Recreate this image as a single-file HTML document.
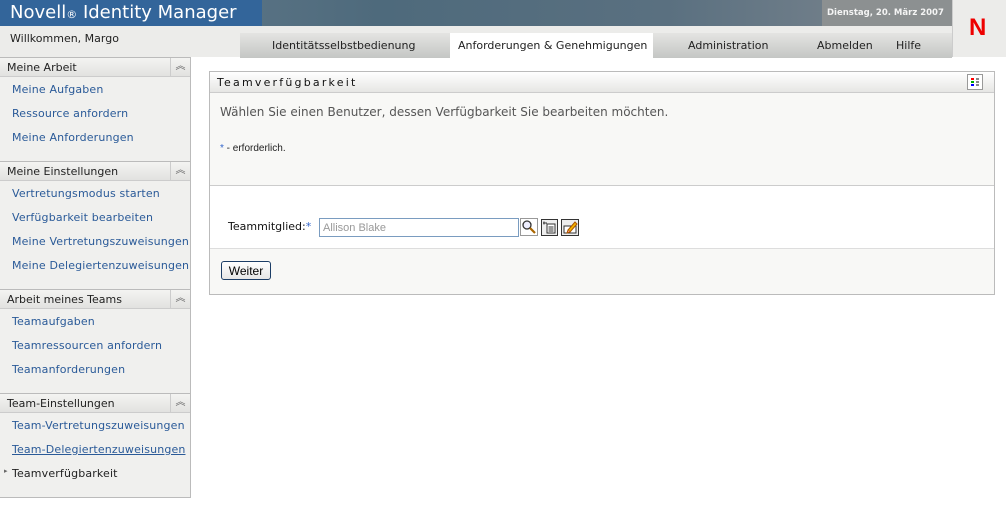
<!DOCTYPE html>
<html><head><meta charset="utf-8"><style>
*{margin:0;padding:0;box-sizing:border-box}
body{width:1006px;height:517px;background:#fff;font-family:"DejaVu Sans","Liberation Sans",sans-serif;font-size:12px;position:relative;overflow:hidden}
.a{position:absolute;white-space:nowrap}
.top{left:0;top:0;width:952px;height:26px;background:linear-gradient(90deg,#6a8090,#4e6a7c 40%,#5a7080 70%,#808890)}
.logo{left:0;top:0;width:262px;height:26px;background:#33659a;color:#fff;font-size:18px;padding:2px 0 0 10px}
.date{left:822px;top:0;width:130px;height:26px;background:#8c9091;color:#f4f4f4;font-size:8.5px;font-weight:bold;padding:8px 0 0 5px}
.bar{left:0;top:26px;width:952px;height:31px;background:#ececea}
.tabs{left:240px;top:33px;width:712px;height:25px;background:linear-gradient(#e4e4e2,#c4c6c4)}
.tab{top:33px;height:25px;padding-top:6px;font-size:11px;color:#222}
.nbox{left:952px;top:0;width:54px;height:57px;background:#ececea;border-left:1px solid #ccc}
.side{left:0;top:57px;width:191px;height:441px;background:#f0f0ee;border-right:1px solid #bbb;border-bottom:1px solid #bbb}
.sh{left:0;width:190px;height:20px;background:linear-gradient(#f4f4f2,#e2e2e0);border-top:1px solid #bbb;border-bottom:1px solid #ccc;font-size:11px;color:#222;padding:3px 0 0 7px}
.sh i{position:absolute;right:0;top:0;width:20px;height:18px;border-left:1px solid #ccc;font-style:normal;font-size:10px;color:#666;text-align:center;line-height:18px}
.lk{left:12px;font-size:11px;color:#2a5a98;letter-spacing:0.15px}
.panel{left:209px;top:71px;width:786px;height:224px;border:1px solid #bbb;background:#f8f8f6}
</style></head><body>
<div class="a top"></div>
<div class="a logo">Novell<span style="font-size:11px">®</span> Identity Manager</div>
<div class="a date">Dienstag, 20. März 2007</div>
<div class="a bar"></div>
<div class="a" style="left:10px;top:32px;font-size:11px;color:#222">Willkommen, Margo</div>
<div class="a tabs"></div>
<div class="a" style="left:450px;top:33px;width:203px;height:25px;background:#fff"></div>
<div class="a tab" style="left:272px">Identitätsselbstbedienung</div>
<div class="a tab" style="left:458px">Anforderungen &amp; Genehmigungen</div>
<div class="a tab" style="left:688px">Administration</div>
<div class="a tab" style="left:817px">Abmelden</div>
<div class="a tab" style="left:896px">Hilfe</div>
<div class="a nbox"><div class="a" style="left:16px;top:14px;font:bold 24px 'Liberation Sans',sans-serif;color:#e00">N</div></div>

<div class="a side"></div>
<div class="a sh" style="top:57px">Meine Arbeit<i>︽</i></div>
<div class="a lk" style="top:83px">Meine Aufgaben</div>
<div class="a lk" style="top:107px">Ressource anfordern</div>
<div class="a lk" style="top:131px">Meine Anforderungen</div>
<div class="a sh" style="top:161px">Meine Einstellungen<i>︽</i></div>
<div class="a lk" style="top:187px">Vertretungsmodus starten</div>
<div class="a lk" style="top:211px">Verfügbarkeit bearbeiten</div>
<div class="a lk" style="top:235px">Meine Vertretungszuweisungen</div>
<div class="a lk" style="top:259px">Meine Delegiertenzuweisungen</div>
<div class="a sh" style="top:289px">Arbeit meines Teams<i>︽</i></div>
<div class="a lk" style="top:315px">Teamaufgaben</div>
<div class="a lk" style="top:339px">Teamressourcen anfordern</div>
<div class="a lk" style="top:363px">Teamanforderungen</div>
<div class="a sh" style="top:393px">Team-Einstellungen<i>︽</i></div>
<div class="a lk" style="top:419px">Team-Vertretungszuweisungen</div>
<div class="a lk" style="top:443px;text-decoration:underline">Team-Delegiertenzuweisungen</div>
<div class="a" style="left:4px;top:467px;font-size:7px;color:#666">▸</div>
<div class="a lk" style="top:467px;color:#222">Teamverfügbarkeit</div>

<div class="a panel"></div>
<div class="a" style="left:210px;top:72px;width:784px;height:21px;background:linear-gradient(#fff,#e6e6e4);border-bottom:1px solid #ccc"></div>
<div class="a" style="left:217px;top:76px;font-size:11px;letter-spacing:2.2px;color:#111">Teamverfügbarkeit</div>
<svg class="a" style="left:967px;top:74px" width="16" height="16" viewBox="0 0 16 16"><rect x="0.5" y="0.5" width="15" height="15" fill="#fff" stroke="#999"/><rect x="4" y="4" width="3" height="2" fill="red"/><rect x="9" y="4" width="3" height="2" fill="#888"/><rect x="4" y="7" width="3" height="2" fill="#0a0"/><rect x="9" y="7" width="3" height="2" fill="#888"/><rect x="4" y="10" width="3" height="2" fill="#00f"/><rect x="9" y="10" width="3" height="2" fill="#888"/></svg>
<div class="a" style="left:220px;top:105px;font-size:12px;color:#555">Wählen Sie einen Benutzer, dessen Verfügbarkeit Sie bearbeiten möchten.</div>
<div class="a" style="left:220px;top:143px;font:10px 'Liberation Sans',sans-serif;color:#222"><span style="color:#36c">*</span> - erforderlich.</div>
<div class="a" style="left:210px;top:185px;width:784px;height:64px;background:#fff;border-top:1px solid #ccc;border-bottom:1px solid #ddd"></div>
<div class="a" style="left:228px;top:220px;font-size:11px;color:#111">Teammitglied:<span style="color:#36c">*</span></div>
<div class="a" style="left:319px;top:218px;width:200px;height:19px;border:1px solid #7a9cc0;background:#fff;font:11px 'Liberation Sans',sans-serif;color:#999;padding:3px 0 0 3px">Allison Blake</div>
<svg class="a" style="left:520px;top:218px" width="18" height="18" viewBox="0 0 18 18"><rect x="0.5" y="0.5" width="17" height="17" fill="#fff" stroke="#333" stroke-dasharray="1 1"/><circle cx="7" cy="7" r="4" fill="#eef" stroke="#333" stroke-width="1.3"/><line x1="10" y1="10" x2="15" y2="15" stroke="#a60" stroke-width="2.2"/></svg>
<svg class="a" style="left:541px;top:219px" width="17" height="17" viewBox="0 0 17 17"><rect x="0.5" y="0.5" width="16" height="16" fill="#eee" stroke="#333"/><rect x="6" y="5" width="8" height="9" fill="#fff" stroke="#333"/><line x1="7.5" y1="8" x2="12.5" y2="8" stroke="#333"/><line x1="7.5" y1="10" x2="12.5" y2="10" stroke="#333"/><line x1="7.5" y1="12" x2="12.5" y2="12" stroke="#333"/><path d="M2 4h4M3 2.5v3" stroke="#333"/></svg>
<svg class="a" style="left:561px;top:219px" width="18" height="17" viewBox="0 0 18 17"><rect x="0.5" y="0.5" width="17" height="16" fill="#eee" stroke="#333"/><rect x="3" y="7" width="12" height="7" fill="#fff" stroke="#333"/><path d="M7 11l7-8 2 2-7 8z" fill="#f4b400" stroke="#a50"/><path d="M7 11l-1 3 3-1" fill="#f99" stroke="#a50"/></svg>
<div class="a" style="left:221px;top:261px;width:50px;height:19px;border:1px solid #1c3d66;border-radius:3px;background:linear-gradient(#fff,#e6e6e6);font:12px 'Liberation Sans',sans-serif;text-align:center;padding-top:2px">Weiter</div>
</body></html>
